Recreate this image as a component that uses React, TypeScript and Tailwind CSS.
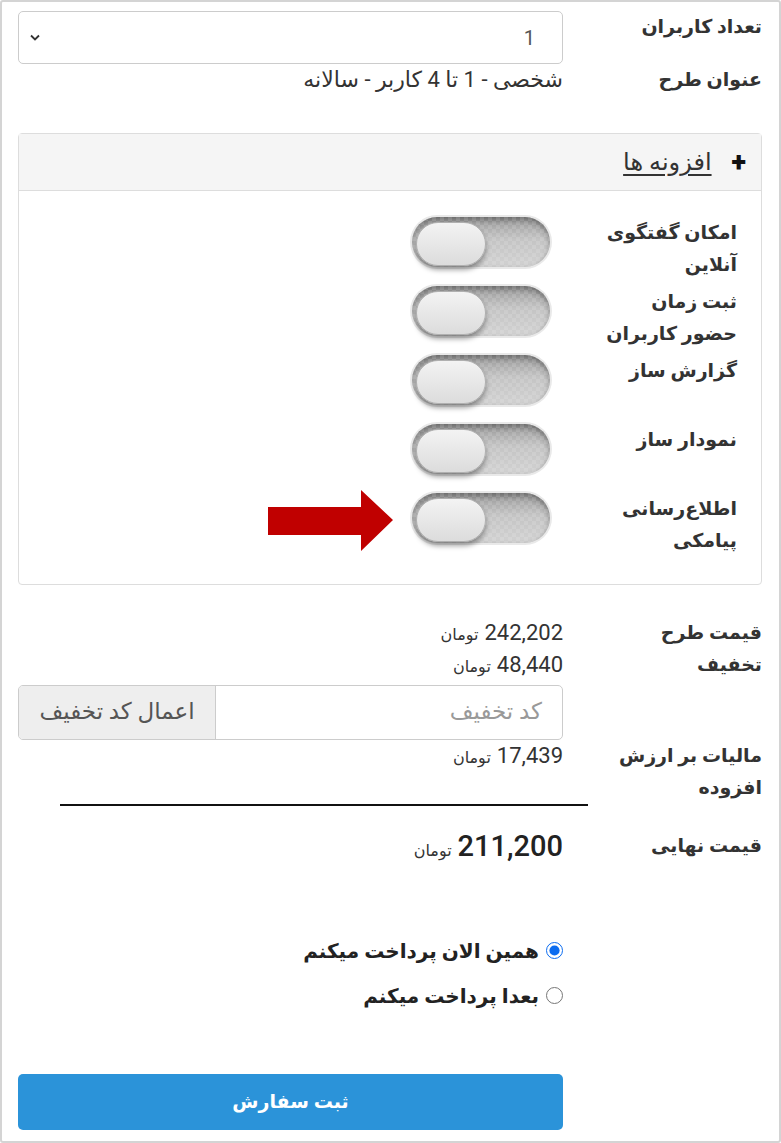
import React from "react";

const fontStack = { fontFamily: '"Roboto", "DejaVu Sans", sans-serif' };

function Toggle() {
  return (
    <div className="relative w-[142px] h-[54px] rounded-full bg-[#e9e9e9] p-[2px] shrink-0">
      <div className="relative w-full h-full rounded-full overflow-hidden bg-[linear-gradient(#9a9a9a,#c4c4c4_45%,#d2d2d2)] shadow-[inset_0_3px_6px_rgba(0,0,0,0.35)]">
        <div className="absolute inset-0 opacity-[0.12] bg-[repeating-conic-gradient(#ffffff_0_25%,transparent_0_50%)] bg-[length:8px_8px]" />
      </div>
      <div className="absolute left-[6px] top-[7px] w-[70px] h-[44px] rounded-full border border-[#b0b0b0] bg-[linear-gradient(#f3f3f3,#dcdcdc)] shadow-[0_4px_5px_rgba(0,0,0,0.35)]" />
    </div>
  );
}

function Price({ value, big }: { value: string; big?: boolean }) {
  return (
    <div className="h-[32px] flex items-baseline gap-[6px] leading-[32px]">
      <span className={big ? "text-[29px] font-medium text-[#222]" : "text-[22px] text-[#333]"}>{value}</span>
      <span className="text-[16px] text-[#333]">تومان</span>
    </div>
  );
}

const addons = [
  ["امکان گفتگوی", "آنلاین"],
  ["ثبت زمان", "حضور کاربران"],
  ["گزارش ساز"],
  ["نمودار ساز"],
  ["اطلاع‌رسانی", "پیامکی"],
];

export default function App() {
  return (
    <div
      dir="rtl"
      style={fontStack}
      className="w-[781px] h-[1143px] bg-white border-2 border-[#d4d4d4] rounded-[3px] pt-[9px] pr-[17px] pl-[16px] text-[#333]"
    >
      <div className="grid grid-cols-[172px_1fr] gap-x-[27px]">
        <div className="text-[19px] font-bold leading-[32px]">تعداد کاربران</div>
        <div className="h-[53px] border border-[#ccc] rounded-[5px] flex items-center justify-between pr-[27px] pl-[11px]">
          <span className="text-[20px] text-[#555]">1</span>
          <svg width="10" height="7" viewBox="0 0 10 7">
            <path d="M1 1.5 L5 5.5 L9 1.5" fill="none" stroke="#333" strokeWidth="1.8" />
          </svg>
        </div>
        <div className="text-[19px] font-bold leading-[32px]">عنوان طرح</div>
        <div className="text-[22px] leading-[32px] text-[#333]">شخصی - 1 تا 4 کاربر - سالانه</div>
      </div>

      <div className="mt-[37px] border border-[#ddd] rounded-[4px]">
        <div className="h-[57px] bg-[#f5f5f5] border-b border-[#ddd] flex items-center pr-[15px] gap-[20px]">
          <span className="text-[27px] font-black leading-none text-[#111]">+</span>
          <span className="text-[24px] underline underline-offset-4 text-[#333]">افزونه ها</span>
        </div>
        <div className="pt-[24px] pb-[24px] pr-[24px]">
          {addons.map((lines, i) => (
            <div key={i} className="relative h-[69px] flex items-start gap-[44px]">
              <div className="w-[141px] mt-[2px] text-[19px] font-bold leading-[32px] text-[#333]">
                {lines.map((l, j) => (
                  <div key={j}>{l}</div>
                ))}
              </div>
              <Toggle />
              {i === addons.length - 1 && (
                <svg className="absolute left-[249px] top-[-1px]" width="125" height="61" viewBox="0 0 125 61">
                  <polygon points="0,17 93,17 93,0 125,30 93,61 93,45 0,45" fill="#c00000" />
                </svg>
              )}
            </div>
          ))}
        </div>
      </div>

      <div className="mt-[32px] grid grid-cols-[172px_1fr] gap-x-[27px]">
        <div className="text-[19px] font-bold leading-[32px]">قیمت طرح</div>
        <Price value="242,202" />
        <div className="text-[19px] font-bold leading-[32px]">تخفیف</div>
        <div>
          <Price value="48,440" />
          <div className="mt-[4px] h-[55px] flex border border-[#ccc] rounded-[5px] overflow-hidden">
            <div className="flex-1 flex items-center pr-[20px] text-[23px] text-[#999]">کد تخفیف</div>
            <div className="w-[197px] flex items-center justify-center bg-[#eee] border-r border-[#ccc] text-[23px] text-[#555]">
              اعمال کد تخفیف
            </div>
          </div>
        </div>
        <div className="text-[19px] font-bold leading-[32px]">
          <div>مالیات بر ارزش</div>
          <div>افزوده</div>
        </div>
        <Price value="17,439" />
      </div>

      <div className="h-[2px] bg-[#111] ml-[42px] mr-[174px]" />

      <div className="mt-[24px] grid grid-cols-[172px_1fr] gap-x-[27px]">
        <div className="text-[19px] font-bold leading-[32px]">قیمت نهایی</div>
        <Price value="211,200" big />
      </div>

      <div className="mt-[66px] mr-[199px] flex flex-col">
        <label className="h-[45px] flex items-center gap-[7px] text-[20px] font-bold text-[#222]">
          <input type="radio" name="pay" defaultChecked className="w-[17px] h-[17px] m-0 accent-[#0b6cf0]" />
          همین الان پرداخت میکنم
        </label>
        <label className="h-[45px] flex items-center gap-[7px] text-[20px] font-bold text-[#222]">
          <input type="radio" name="pay" className="w-[17px] h-[17px] m-0" />
          بعدا پرداخت میکنم
        </label>
      </div>

      <button className="mt-[56px] mr-[199px] w-[545px] h-[56px] rounded-[5px] bg-[#2b93d9] text-white text-[19px] font-bold">
        ثبت سفارش
      </button>
    </div>
  );
}
